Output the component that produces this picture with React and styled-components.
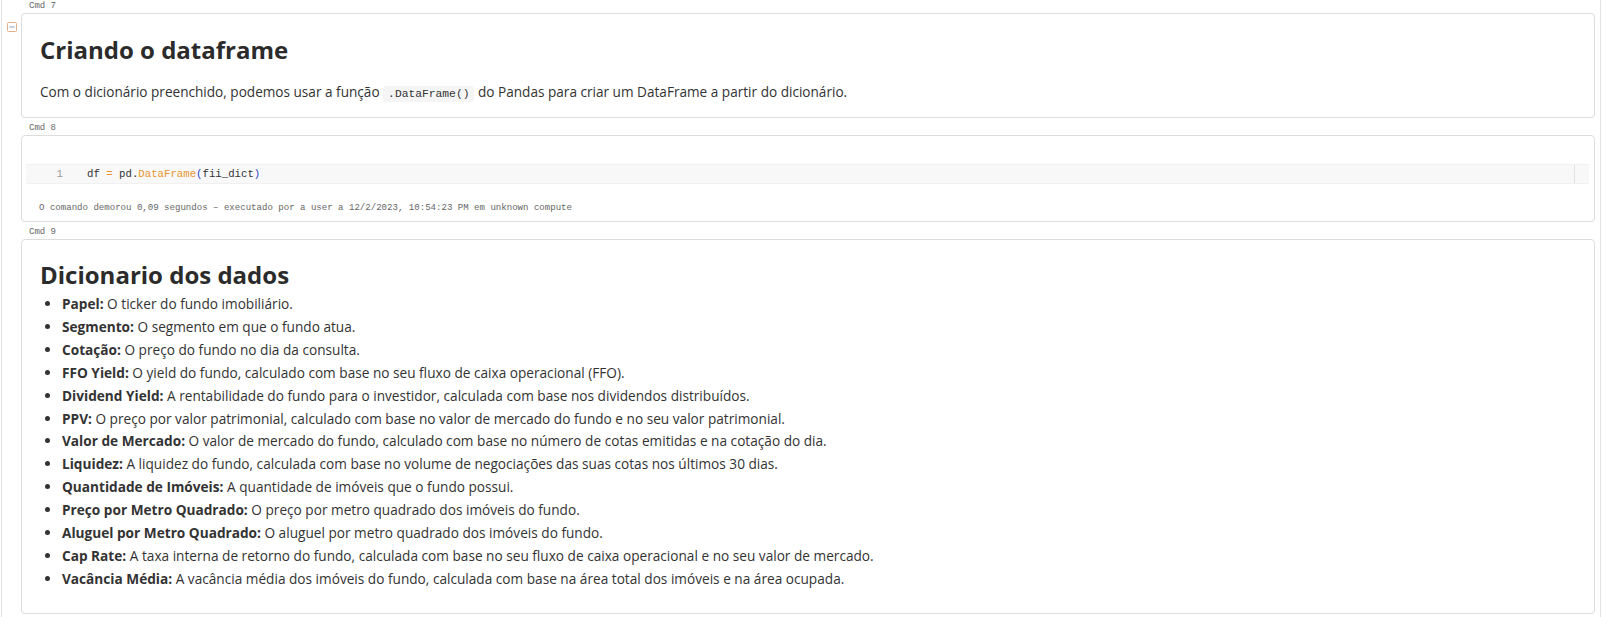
import React from 'react'
import styled, { createGlobalStyle } from 'styled-components'

const GlobalStyle = createGlobalStyle`
  html, body {
    margin: 0;
    padding: 0;
    background: #ffffff;
  }
  body {
    font-family: "Open Sans", "Noto Sans", sans-serif;
    color: #333333;
  }
`;

const Page = styled.div`
  margin-left: 1px;
  width: 1600px;
  min-height: 100vh;
  box-sizing: border-box;
  border-left: 1px solid #e4e4e4;
  border-right: 1px solid #e4e4e4;
  padding-right: 5px;
`;

const Cell = styled.div`
  display: grid;
  grid-template-columns: 19px 1fr;
  grid-template-rows: 13px auto;
  margin-bottom: 4px;
`;

const CmdLabel = styled.div`
  grid-column: 2;
  padding-left: 8px;
  font-family: "Liberation Mono", monospace;
  font-size: 9px;
  line-height: 13px;
  color: #666666;
`;

const Gutter = styled.div`
  grid-column: 1;
  grid-row: 2;
  padding: 2px 0 0 5px;
`;

const Card = styled.div`
  grid-column: 2;
  grid-row: 2;
  border: 1px solid #dddddd;
  border-radius: 4px;
  background: #fff;
  padding: ${p => p.$code ? '28px 5px 7px 4px' : '22px 18px 15px 18px'};
  padding-bottom: ${p => p.$bottom || undefined};
  padding-top: ${p => p.$top || undefined};
`;

const Heading = styled.h1`
  margin: 0 0 ${p => p.$gap || '16px'} 0;
  font-size: 24px;
  line-height: 28.8px;
  font-weight: 700;
  color: #2b2b2b;
`;

const Paragraph = styled.p`
  margin: 0;
  font-size: 13.6px;
  line-height: 21px;
`;

const InlineCode = styled.code`
  font-family: "Liberation Mono", monospace;
  font-size: 11.3px;
  line-height: 1;
  background: #f5f5f5;
  border-radius: 3px;
  padding: 2px 5px;
  color: #333;
`;

const CodeRow = styled.div`
  display: flex;
  height: 20px;
  align-items: stretch;
  background: #f8f8f8;
  border-top: 1px solid #f1f1f1;
  border-bottom: 1px solid #f1f1f1;
  box-sizing: border-box;
  font-family: "Liberation Mono", monospace;
  font-size: 10.7px;
  line-height: 18px;
`;

const LineNo = styled.span`
  width: 37px;
  text-align: right;
  color: #9a9a9a;
`;

const CodeText = styled.span`
  flex: 1;
  padding-left: 24px;
  color: #333;
`;

const Tok = styled.span`
  color: ${p => p.$c};
`;

const ScrollEdge = styled.div`
  width: 14px;
  border-left: 1px solid #e2e2e2;
`;

const Footer = styled.div`
  margin-top: 17px;
  padding-left: 13px;
  font-family: "Liberation Mono", monospace;
  font-size: 9.07px;
  line-height: 13px;
  color: #666666;
`;

const List = styled.ul`
  margin: 0;
  padding-left: 22px;
  font-size: 13.65px;
  line-height: 21px;
`;

const Item = styled.li`
  margin-bottom: 1.9px;
`;

const CollapseIcon = () => (
  <svg width="10" height="10" viewBox="0 0 10 10">
    <rect x="0.5" y="0.5" width="9" height="9" rx="1" fill="none" stroke="#e0b08a" />
    <line x1="2.5" y1="5" x2="7.5" y2="5" stroke="#8f9db3" strokeWidth="1" />
  </svg>
);

const items = [
  ['Papel:', 'O ticker do fundo imobiliário.'],
  ['Segmento:', 'O segmento em que o fundo atua.'],
  ['Cotação:', 'O preço do fundo no dia da consulta.'],
  ['FFO Yield:', 'O yield do fundo, calculado com base no seu fluxo de caixa operacional (FFO).'],
  ['Dividend Yield:', 'A rentabilidade do fundo para o investidor, calculada com base nos dividendos distribuídos.'],
  ['PPV:', 'O preço por valor patrimonial, calculado com base no valor de mercado do fundo e no seu valor patrimonial.'],
  ['Valor de Mercado:', 'O valor de mercado do fundo, calculado com base no número de cotas emitidas e na cotação do dia.'],
  ['Liquidez:', 'A liquidez do fundo, calculada com base no volume de negociações das suas cotas nos últimos 30 dias.'],
  ['Quantidade de Imóveis:', 'A quantidade de imóveis que o fundo possui.'],
  ['Preço por Metro Quadrado:', 'O preço por metro quadrado dos imóveis do fundo.'],
  ['Aluguel por Metro Quadrado:', 'O aluguel por metro quadrado dos imóveis do fundo.'],
  ['Cap Rate:', 'A taxa interna de retorno do fundo, calculada com base no seu fluxo de caixa operacional e no seu valor de mercado.'],
  ['Vacância Média:', 'A vacância média dos imóveis do fundo, calculada com base na área total dos imóveis e na área ocupada.'],
];

const App = () => {
  return (
    <>
      <GlobalStyle />
      <Page>
        <Cell>
          <CmdLabel>Cmd 7</CmdLabel>
          <Gutter><CollapseIcon /></Gutter>
          <Card>
            <Heading>Criando o dataframe</Heading>
            <Paragraph>
              Com o dicionário preenchido, podemos usar a função <InlineCode>.DataFrame()</InlineCode> do Pandas para criar um DataFrame a partir do dicionário.
            </Paragraph>
          </Card>
        </Cell>

        <Cell>
          <CmdLabel>Cmd 8</CmdLabel>
          <Card $code>
            <CodeRow>
              <LineNo>1</LineNo>
              <CodeText>
                df <Tok $c="#e8902a">=</Tok> pd.<Tok $c="#e8962e">DataFrame</Tok><Tok $c="#2a3fd4">(</Tok>fii_dict<Tok $c="#2a3fd4">)</Tok>
              </CodeText>
              <ScrollEdge />
            </CodeRow>
            <Footer>O comando demorou 0,09 segundos – executado por a user a 12/2/2023, 10:54:23 PM em unknown compute</Footer>
          </Card>
        </Cell>

        <Cell>
          <CmdLabel>Cmd 9</CmdLabel>
          <Card $top="21px" $bottom="22px">
            <Heading $gap="3.5px">Dicionario dos dados</Heading>
            <List>
              {items.map(([k, v]) => (
                <Item key={k}><b>{k}</b> {v}</Item>
              ))}
            </List>
          </Card>
        </Cell>
      </Page>
    </>
  );
};

export default App;
